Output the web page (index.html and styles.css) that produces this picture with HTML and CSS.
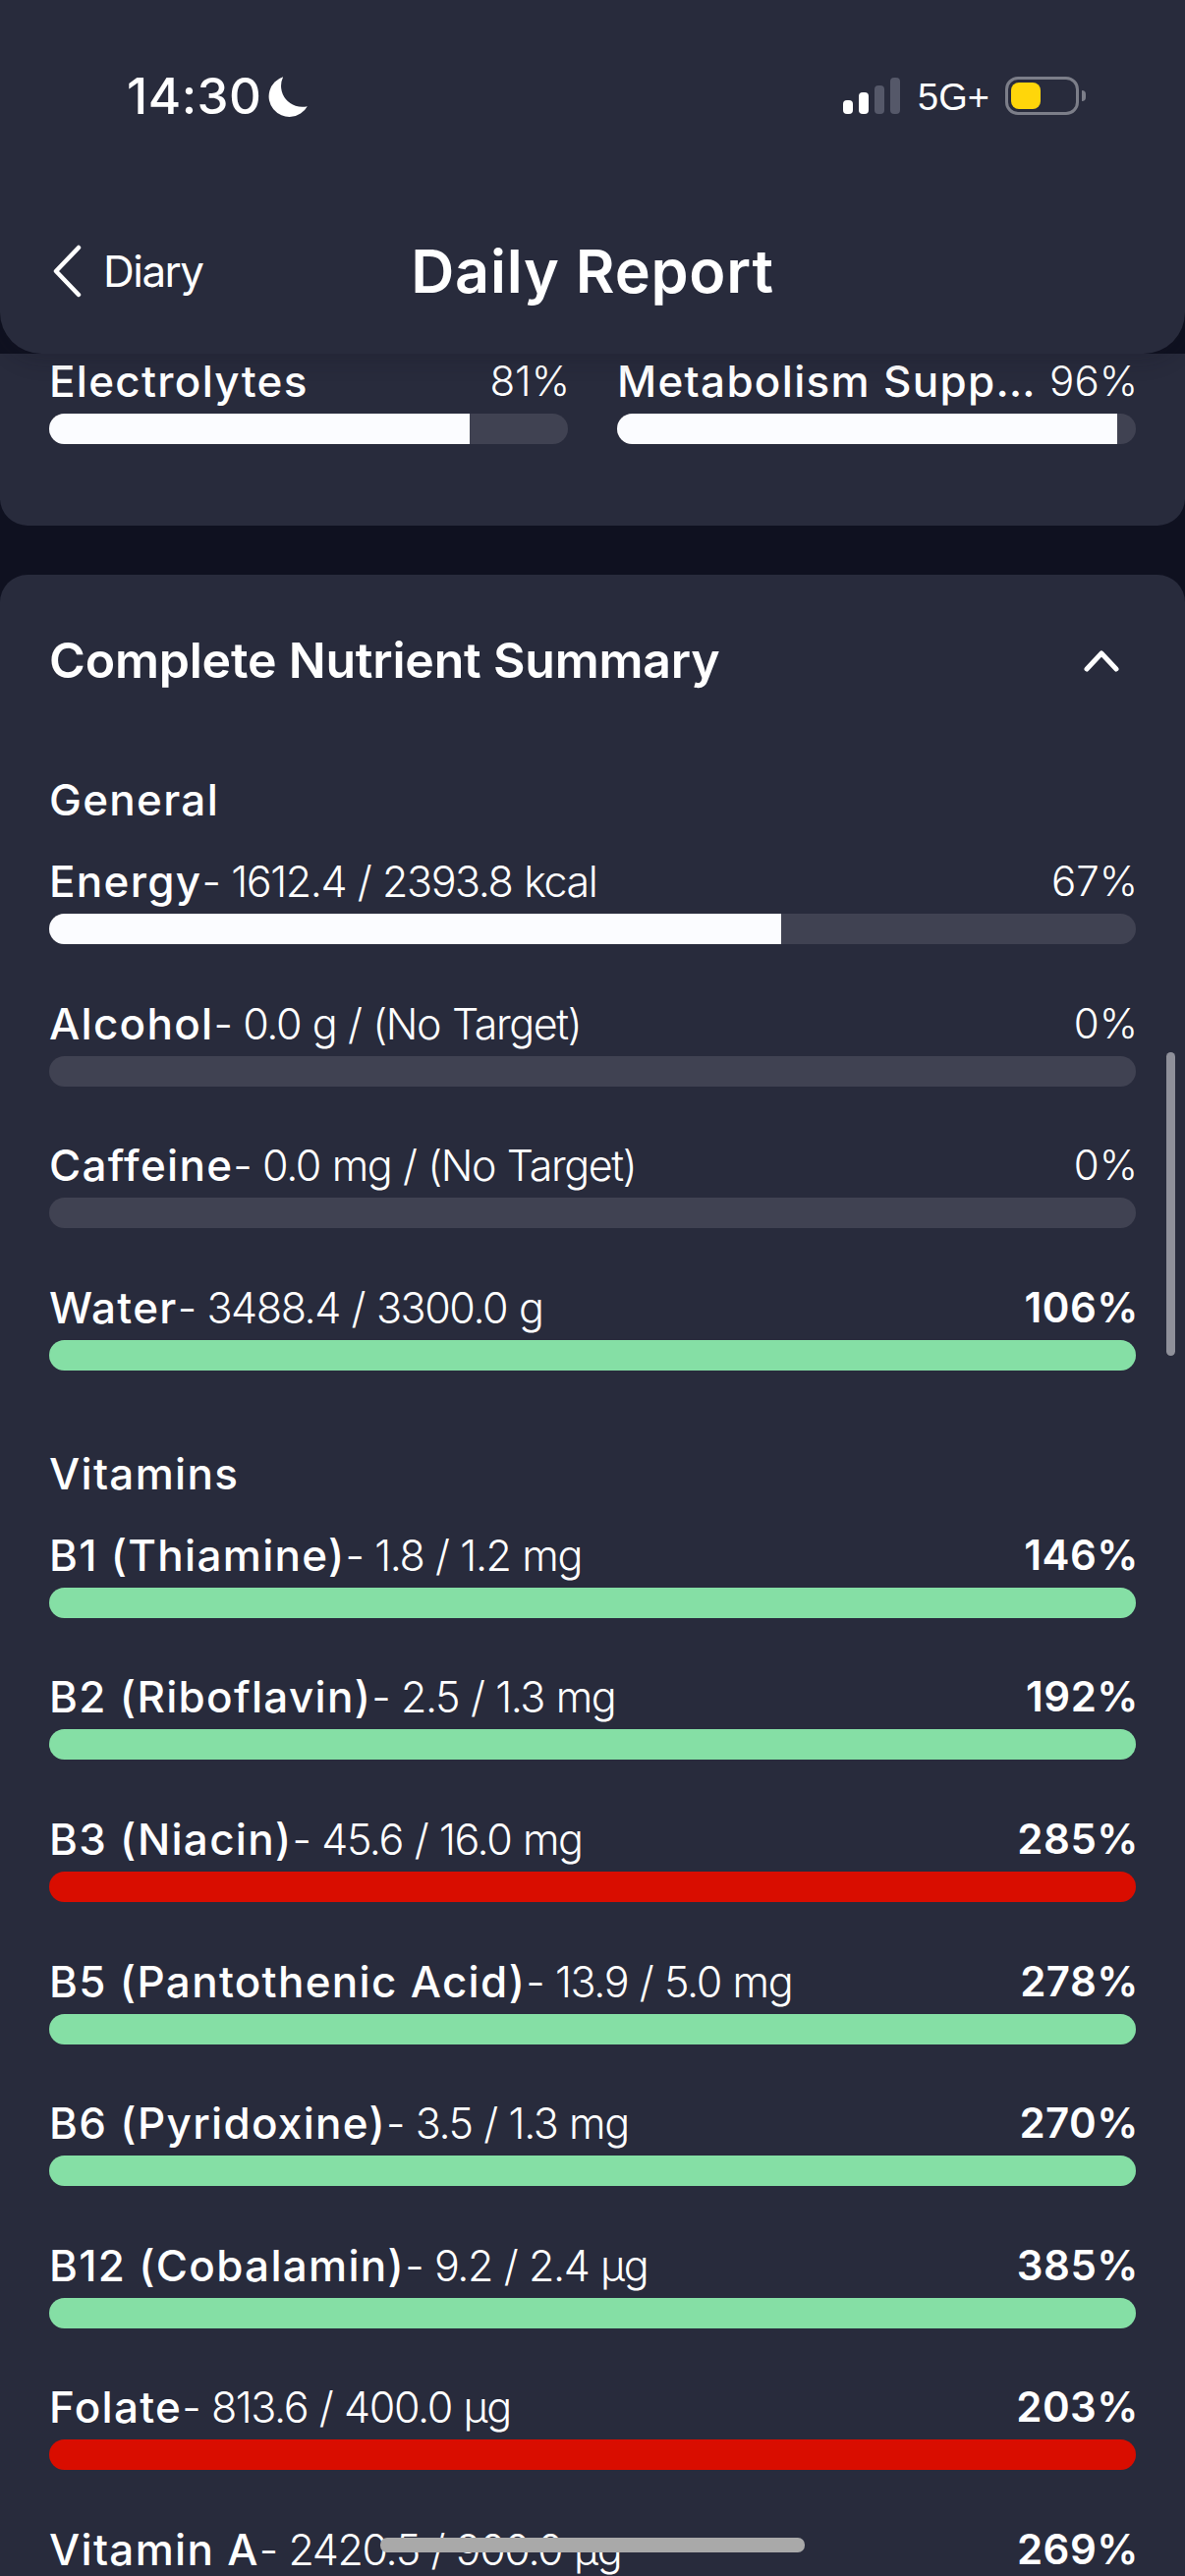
FILE: index.html
```html
<!DOCTYPE html>
<html lang="en">
<head>
<meta charset="utf-8">
<title>Daily Report</title>
<link rel="stylesheet" href="styles.css">
</head>
<body>
<div class="screen">
  <header class="top">
    <div class="status">
      <div class="status-left">
        <span class="clock">14:30</span>
        <svg class="moon" width="43" height="45" viewBox="0 0 40 42"><path d="M15 2A19.500 19.500 0 1 0 38 30A20 20 0 0 1 15 2Z" fill="#fff"/></svg>
      </div>
      <div class="status-right">
        <div class="signal"><i class="sig s1"></i><i class="sig s2"></i><i class="sig s3"></i><i class="sig s4"></i></div>
        <span class="net">5G+</span>
        <div class="battery"><div class="battery-level"></div></div>
        <div class="battery-nub"></div>
      </div>
    </div>
    <nav class="nav">
      <div class="back">
        <svg class="back-icon" width="32" height="54" viewBox="0 0 32 54"><path d="M28 3L5 27L28 51" fill="none" stroke="#fff" stroke-width="4.500" stroke-linecap="round" stroke-linejoin="round"/></svg>
        <span>Diary</span>
      </div>
      <h1>Daily Report</h1>
    </nav>
  </header>

  <main class="content">
    <section class="card card-goals">
      <div class="goals">
        <div class="goal">
          <div class="row-head"><span class="name">Electrolytes</span><span class="pct">81%</span></div>
          <div class="track"><div class="fill white" style="width:81%"></div></div>
        </div>
        <div class="goal">
          <div class="row-head"><span class="name">Metabolism Supp…</span><span class="pct">96%</span></div>
          <div class="track"><div class="fill white" style="width:96.400%"></div></div>
        </div>
      </div>
    </section>

    <section class="card card-summary">
      <div class="summary-head">
        <h2>Complete Nutrient Summary</h2>
        <svg class="chevron" width="36" height="24" viewBox="0 0 36 24"><path d="M3 21L18 5L33 21" fill="none" stroke="#fff" stroke-width="5" stroke-linecap="round" stroke-linejoin="round"/></svg>
      </div>

      <h3>General</h3>
      <div class="list">
        <div class="nutrient">
          <div class="row-head"><span><span class="name">Energy</span><span class="val">- 1612.4 / 2393.8 kcal</span></span><span class="pct">67%</span></div>
          <div class="track"><div class="fill white" style="width:67.360%"></div></div>
        </div>
        <div class="nutrient">
          <div class="row-head"><span><span class="name">Alcohol</span><span class="val">- 0.0 g / (No Target)</span></span><span class="pct">0%</span></div>
          <div class="track"></div>
        </div>
        <div class="nutrient">
          <div class="row-head"><span><span class="name">Caffeine</span><span class="val">- 0.0 mg / (No Target)</span></span><span class="pct">0%</span></div>
          <div class="track"></div>
        </div>
        <div class="nutrient">
          <div class="row-head"><span><span class="name">Water</span><span class="val">- 3488.4 / 3300.0 g</span></span><span class="pct over">106%</span></div>
          <div class="track"><div class="fill green" style="width:100%"></div></div>
        </div>
      </div>

      <h3 class="second">Vitamins</h3>
      <div class="list">
        <div class="nutrient">
          <div class="row-head"><span><span class="name">B1 (Thiamine)</span><span class="val">- 1.8 / 1.2 mg</span></span><span class="pct over">146%</span></div>
          <div class="track"><div class="fill green" style="width:100%"></div></div>
        </div>
        <div class="nutrient">
          <div class="row-head"><span><span class="name">B2 (Riboflavin)</span><span class="val">- 2.5 / 1.3 mg</span></span><span class="pct over">192%</span></div>
          <div class="track"><div class="fill green" style="width:100%"></div></div>
        </div>
        <div class="nutrient">
          <div class="row-head"><span><span class="name">B3 (Niacin)</span><span class="val">- 45.6 / 16.0 mg</span></span><span class="pct over">285%</span></div>
          <div class="track"><div class="fill red" style="width:100%"></div></div>
        </div>
        <div class="nutrient">
          <div class="row-head"><span><span class="name">B5 (Pantothenic Acid)</span><span class="val">- 13.9 / 5.0 mg</span></span><span class="pct over">278%</span></div>
          <div class="track"><div class="fill green" style="width:100%"></div></div>
        </div>
        <div class="nutrient">
          <div class="row-head"><span><span class="name">B6 (Pyridoxine)</span><span class="val">- 3.5 / 1.3 mg</span></span><span class="pct over">270%</span></div>
          <div class="track"><div class="fill green" style="width:100%"></div></div>
        </div>
        <div class="nutrient">
          <div class="row-head"><span><span class="name">B12 (Cobalamin)</span><span class="val">- 9.2 / 2.4 µg</span></span><span class="pct over">385%</span></div>
          <div class="track"><div class="fill green" style="width:100%"></div></div>
        </div>
        <div class="nutrient">
          <div class="row-head"><span><span class="name">Folate</span><span class="val">- 813.6 / 400.0 µg</span></span><span class="pct over">203%</span></div>
          <div class="track"><div class="fill red" style="width:100%"></div></div>
        </div>
        <div class="nutrient">
          <div class="row-head"><span><span class="name">Vitamin A</span><span class="val">- 2420.5 / 900.0 µg</span></span><span class="pct over">269%</span></div>
          <div class="track"><div class="fill green" style="width:100%"></div></div>
        </div>
      </div>
    </section>
  </main>

  <div class="scrollbar"></div>
  <div class="home-indicator"></div>
</div>
</body>
</html>
```
FILE: styles.css
```css
* { box-sizing: border-box; }
html, body { margin: 0; padding: 0; background: #0f1120; }
.screen {
  position: relative;
  width: 1206px;
  height: 2622px;
  overflow: hidden;
  background: #0f1120;
  color: #fff;
  font-family: Inter, "Noto Sans", sans-serif;
}

/* header */
.top {
  position: relative;
  z-index: 2;
  height: 360px;
  background: #282b3c;
  border-radius: 0 0 42px 42px;
  box-shadow: 0 6px 22px rgba(16, 18, 32, .22);
}
.status {
  display: flex;
  justify-content: space-between;
  padding: 76px 101px 0 129px;
  height: 128px;
}
.status-left { display: flex; align-items: flex-start; gap: 5px; }
.clock { font-size: 51px; line-height: 44px; font-weight: 500; letter-spacing: .5px; }
.moon { margin-top: 0; }
.status-right { display: flex; align-items: flex-start; }
.signal { display: flex; align-items: flex-end; gap: 6px; height: 37px; margin-top: 3px; }
.sig { display: block; width: 10px; border-radius: 4px; background: #555869; }
.s1 { height: 14px; background: #fff; }
.s2 { height: 22px; background: #fff; }
.s3 { height: 29px; }
.s4 { height: 37px; }
.net { margin: 6px 16px 0 18px; font-family: "Liberation Sans", sans-serif; font-size: 38px; line-height: 34px; }
.battery {
  width: 75px;
  height: 39px;
  margin-top: 2px;
  padding: 3px;
  border: 3px solid #7c7e89;
  border-radius: 13px;
}
.battery-level { width: 30px; height: 27px; border-radius: 8px; background: #ffd60a; }
.battery-nub {
  width: 4px;
  height: 11px;
  margin: 16px 0 0 3px;
  background: #7c7e89;
  border-radius: 0 6px 6px 0;
}
.nav {
  position: relative;
  height: 110px;
  margin-top: 93px;
  display: flex;
  align-items: center;
  justify-content: center;
}
.back {
  position: absolute;
  left: 52px;
  top: 28px;
  display: flex;
  align-items: center;
  gap: 21px;
  font-size: 44px;
  font-weight: 400;
  letter-spacing: -1.5px;
}
.nav h1 { margin: 0; font-size: 61px; font-weight: 600; letter-spacing: .8px; }

/* cards */
.card { background: #282b3c; }
.card-goals {
  height: 175px;
  padding: 0 50px;
  border-radius: 0 0 28px 28px;
}
.goals { display: grid; grid-template-columns: 528px 528px; gap: 50px; padding-top: 3px; }
.card-summary {
  margin-top: 50px;
  padding: 54px 50px 0;
  border-radius: 28px 28px 0 0;
}
.summary-head {
  display: flex;
  justify-content: space-between;
  align-items: center;
  height: 66px;
}
.summary-head h2 { margin: 0; font-size: 50px; font-weight: 600; line-height: 66px; letter-spacing: -.2px; }
.chevron { margin-right: 17px; }
h3 { margin: 84px 0 0; font-size: 44px; font-weight: 500; line-height: 50px; letter-spacing: 1.3px; }
h3.second { margin-top: 80px; }

/* rows */
.list { display: flex; flex-direction: column; gap: 55.6px; margin-top: 33px; }
.row-head {
  display: flex;
  justify-content: space-between;
  font-size: 44px;
  line-height: 50px;
  white-space: nowrap;
}
.name { font-weight: 500; letter-spacing: 1.3px; }
.val { font-size: 43px; font-weight: 300; letter-spacing: -1.4px; word-spacing: 1px; }
.pct { font-size: 42px; font-weight: 300; margin-right: -2px; }
.pct.over { font-weight: 600; letter-spacing: .5px; margin-right: -3px; }
.track {
  height: 31px;
  margin-top: 8px;
  border-radius: 16px;
  background: #404252;
  overflow: hidden;
}
.fill { height: 100%; }
.white { background: #fbfcff; }
.green { background: #85dfa5; }
.red { background: #d90d00; }

/* overlays */
.scrollbar {
  position: absolute;
  right: 10px;
  top: 1071px;
  width: 9px;
  height: 309px;
  border-radius: 5px;
  background: #8f909a;
}
.home-indicator {
  position: absolute;
  left: 387px;
  top: 2583px;
  width: 432px;
  height: 15px;
  border-radius: 7px;
  background: #a9a9a9;
}
```
